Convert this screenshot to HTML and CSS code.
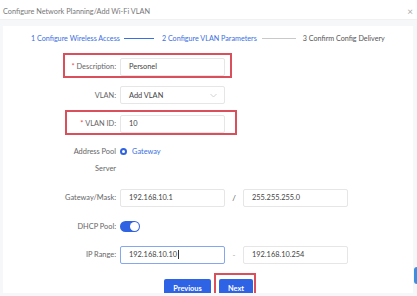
FILE: index.html
```html
<!DOCTYPE html>
<html lang="en">
<head>
    <meta charset="UTF-8">
    <title>Add Wi-Fi VLAN</title>
    <link rel="stylesheet" href="styles.css">
</head>
<body>
    <div class="modal">
        <div class="modal-head">
            <span class="modal-title">Configure Network Planning/Add Wi-Fi VLAN</span>
            <span class="close">&times;</span>
        </div>
        <div class="modal-body">
            <div class="panel">
                <div class="steps">
                    <span class="step done">1 Configure Wireless Access</span>
                    <span class="step-line done"></span>
                    <span class="step done">2 Configure VLAN Parameters</span>
                    <span class="step-line"></span>
                    <span class="step">3 Confirm Config Delivery</span>
                </div>

                <div class="form">
                    <div class="row marked mark-1">
                        <label class="label"><span class="req">*</span> Description:</label>
                        <div class="input">Personel</div>
                    </div>
                    <div class="row">
                        <label class="label">VLAN:</label>
                        <div class="input select">Add VLAN
                            <svg class="chev" width="7" height="5" viewBox="0 0 7 5"><path d="M0.5 1 L3.5 4 L6.5 1" fill="none" stroke="#c8c8c8" stroke-width="0.8"/></svg>
                        </div>
                    </div>
                    <div class="row marked mark-2">
                        <label class="label"><span class="req">*</span> VLAN ID:</label>
                        <div class="input">10</div>
                    </div>
                    <div class="row tall">
                        <label class="label">Address Pool<br>Server</label>
                        <div class="radio-line">
                            <span class="radio"></span>
                            <span class="radio-text">Gateway</span>
                        </div>
                    </div>
                    <div class="row">
                        <label class="label">Gateway/Mask:</label>
                        <div class="input">192.168.10.1</div>
                        <span class="sep">/</span>
                        <div class="input">255.255.255.0</div>
                    </div>
                    <div class="row">
                        <label class="label">DHCP Pool:</label>
                        <span class="switch"><span class="knob"></span></span>
                    </div>
                    <div class="row">
                        <label class="label">IP Range:</label>
                        <div class="input focus">192.168.10.10<span class="caret"></span></div>
                        <span class="sep dash">-</span>
                        <div class="input">192.168.10.254</div>
                    </div>
                </div>

                <div class="actions">
                    <button class="btn">Previous</button>
                    <button class="btn btn-next">Next</button>
                </div>
            </div>
        </div>
        <span class="float-tab"></span>
    </div>
</body>
</html>
```

FILE: styles.css
```css
body {
    margin: 0;
    font-family: 'Lato', 'Liberation Sans', sans-serif;
    background-color: #fff;
    overflow: hidden;
}
.modal {
    width: 417px;
    height: 296px;
    position: relative;
    overflow: hidden;
}
.modal-head {
    height: 17px;
    display: flex;
    align-items: center;
    justify-content: space-between;
    padding: 0 4px 0 3px;
    font-size: 7.3px;
    color: #777;
    border-bottom: 1px solid #f1f1f1;
    box-sizing: border-box;
    margin-top: 3px;
}
.close {
    font-size: 10px;
    color: #aaa;
}
.modal-body {
    background-color: #f6f7f9;
    padding: 6px 4px 3px 3px;
    height: 276px;
    box-sizing: border-box;
}
.panel {
    background-color: #fff;
    height: 100%;
    overflow: hidden;
    position: relative;
}
.steps {
    display: flex;
    align-items: center;
    height: 24px;
    padding-left: 28px;
    font-size: 7.2px;
    color: #555;
    white-space: nowrap;
}
.step.done {
    color: #3a6fe0;
}
.step-line {
    width: 34px;
    height: 1px;
    background-color: #c9c9c9;
    margin: 0 7px 0 5px;
}
.step-line.done {
    width: 30px;
    margin: 0 8px 0 4px;
    background-color: #3a6fe0;
}
.form {
    display: flex;
    flex-direction: column;
    gap: 10.5px;
    margin-top: 7.5px;
}
.row {
    display: flex;
    align-items: center;
    height: 18px;
    position: relative;
}
.row.tall {
    height: 34px;
    align-items: flex-start;
    margin-bottom: 1px;
}
.label {
    width: 117px;
    text-align: right;
    padding-right: 4px;
    box-sizing: border-box;
    font-size: 7.4px;
    color: #666;
    line-height: 17px;
    flex-shrink: 0;
}
.req {
    color: #e5484d;
}
.input {
    width: 105px;
    height: 18px;
    border: 1px solid #e6e6e6;
    border-radius: 2px;
    box-sizing: border-box;
    font-size: 7.4px;
    color: #444;
    padding-left: 8px;
    display: flex;
    align-items: center;
    position: relative;
}
.input.focus {
    border-color: #86a6ee;
}
.caret {
    width: 1px;
    height: 9px;
    background-color: #333;
    margin-left: 1px;
}
.chev {
    position: absolute;
    right: 7px;
    top: 6px;
}
.sep {
    width: 18px;
    text-align: center;
    font-size: 8px;
    color: #555;
}
.sep.dash {
    color: #aaa;
}
.radio-line {
    display: flex;
    align-items: center;
    height: 17px;
}
.radio {
    width: 3px;
    height: 3px;
    border: 2px solid #2f63e2;
    border-radius: 50%;
    background: #fff;
}
.radio-text {
    font-size: 7.4px;
    color: #3a6fe0;
    margin-left: 5px;
}
.switch {
    width: 20px;
    height: 11px;
    border-radius: 6px;
    background-color: #2f63e2;
    position: relative;
}
.knob {
    position: absolute;
    right: 1px;
    top: 1px;
    width: 9px;
    height: 9px;
    border-radius: 50%;
    background-color: #fff;
}
.marked::after {
    content: "";
    position: absolute;
    border: 2px solid #d94f5c;
    box-sizing: border-box;
    pointer-events: none;
    top: -4.5px;
    height: 25px;
}
.mark-1::after {
    left: 60px;
    width: 169px;
}
.mark-2::after {
    left: 62px;
    width: 172px;
}
.actions {
    display: flex;
    justify-content: center;
    gap: 8px;
    margin-top: 15px;
    padding-left: 1px;
}
.btn {
    font-family: inherit;
    font-size: 7.4px;
    font-weight: bold;
    color: #fff;
    background-color: #2f63e6;
    border: none;
    border-radius: 2px;
    height: 20px;
    padding: 0;
    width: 47px;
}
.btn-next {
    width: 34px;
    position: relative;
}
.btn-next::after {
    content: "";
    position: absolute;
    left: -5px;
    right: -3px;
    top: -6px;
    bottom: -8px;
    border: 2px solid #d94f5c;
}
.float-tab {
    position: absolute;
    right: -3px;
    top: 267px;
    width: 6px;
    height: 17px;
    border-radius: 3px;
    background-color: #3d8de0;
}
```
